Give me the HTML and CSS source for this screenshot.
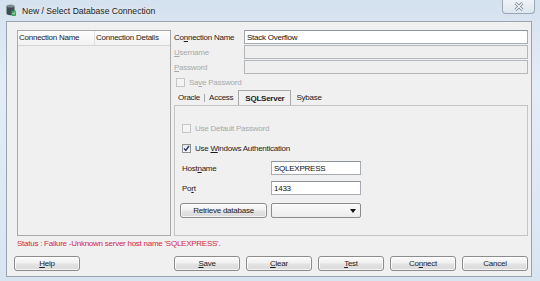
FILE: index.html
```html
<!DOCTYPE html>
<html lang="en">

<head>
    <meta charset="UTF-8">
    <title>New / Select Database Connection</title>
    <link rel="stylesheet" href="styles.css">
</head>

<body>
    <div class="window">
        <div class="titlebar">
            <svg class="app-icon" viewBox="0 0 10 12" width="10" height="12">
                <path d="M0.5 2v7.6c0 .9 1.8 1.6 4 1.6s4-.7 4-1.6V2z" fill="#3e4d52"/>
                <ellipse cx="4.5" cy="2" rx="4" ry="1.6" fill="#7d8c90"/>
                <rect x="5.5" y="6.5" width="4.5" height="5.5" rx="1" fill="#35a457"/>
                <path d="M6.5 9.2l1 1 1.6-2" stroke="#e8f5ea" stroke-width="0.9" fill="none"/>
            </svg>
            <span class="title">New / Select Database Connection</span>
            <div class="close-btn">
                <svg viewBox="0 0 10 9" width="10" height="9">
                    <path d="M1.5 1l7 7M8.5 1l-7 7" stroke="#7c8794" stroke-width="3"/>
                    <path d="M1.5 1l7 7M8.5 1l-7 7" stroke="#f3f6f9" stroke-width="1.3"/>
                </svg>
            </div>
        </div>

        <div class="client">
            <div class="main">
                <!-- saved connections -->
                <div class="conn-list">
                    <div class="list-head">
                        <div class="col col-name">Connection Name</div>
                        <div class="col">Connection Details</div>
                    </div>
                </div>

                <div class="form">
                    <div class="row">
                        <label>Co<u>n</u>nection Name</label>
                        <input type="text" value="Stack Overflow">
                    </div>
                    <div class="row">
                        <label class="disabled"><u>U</u>sername</label>
                        <input type="text" disabled>
                    </div>
                    <div class="row">
                        <label class="disabled"><u>P</u>assword</label>
                        <input type="password" disabled>
                    </div>
                    <div class="check-row disabled">
                        <span class="check"></span>
                        <span>Sa<u>v</u>e Password</span>
                    </div>

                    <div class="tabs">
                        <span class="tab tab-sep">Oracle</span>
                        <span class="tab">Access</span>
                        <span class="tab selected">SQLServer</span>
                        <span class="tab tab-last">Sybase</span>
                    </div>
                    <div class="tab-panel">
                        <div class="panel-check disabled">
                            <span class="check"></span>
                            <span>Use Default Password</span>
                        </div>
                        <div class="panel-check second">
                            <span class="check checked">
                                <svg viewBox="0 0 7 7" width="7" height="7">
                                    <path d="M1 3.5l1.8 2L6 1" stroke="#283a6e" stroke-width="1.4" fill="none"/>
                                </svg>
                            </span>
                            <span>Use <u>W</u>indows Authentication</span>
                        </div>
                        <div class="panel-row host-row">
                            <label>Host<u>n</u>ame</label>
                            <input type="text" value="SQLEXPRESS">
                        </div>
                        <div class="panel-row port-row">
                            <label>Po<u>r</u>t</label>
                            <input type="text" value="1433">
                        </div>
                        <div class="panel-row retrieve-row">
                            <button class="btn retrieve">Retrieve database</button>
                            <div class="combo"><span class="arrow"></span></div>
                        </div>
                    </div>
                </div>
            </div>

            <p class="status">Status : Failure -Unknown server host name 'SQLEXPRESS'.</p>

            <div class="actions">
                <button class="btn"><u>H</u>elp</button>
                <div class="action-group">
                    <button class="btn"><u>S</u>ave</button>
                    <button class="btn"><u>C</u>lear</button>
                    <button class="btn"><u>T</u>est</button>
                    <button class="btn">Co<u>n</u>nect</button>
                    <button class="btn">Cancel</button>
                </div>
            </div>
        </div>
    </div>
</body>

</html>
```

FILE: styles.css
```css
body {
    margin: 0;
    width: 540px;
    height: 281px;
    overflow: hidden;
    font-family: "Liberation Sans", Arial, sans-serif;
    font-size: 8px;
    letter-spacing: -0.25px;
    color: #1c1c1c;
}

.window {
    height: 281px;
    display: flex;
    flex-direction: column;
    background: linear-gradient(#d4e1ee, #e4edf6 30%, #d8e5f1);
}

/* title bar */
.titlebar {
    height: 21px;
    display: flex;
    align-items: flex-start;
    padding-left: 6px;
    flex-shrink: 0;
}

.app-icon {
    margin-top: 4px;
}

.title {
    margin: 6px 0 0 6px;
    font-size: 8.6px;
    letter-spacing: 0;
    line-height: 10px;
    color: #222;
    text-shadow: 0 0 6px #fff;
}

.close-btn {
    margin-left: auto;
    margin-right: 5px;
    width: 31px;
    height: 13px;
    border: 1px solid #9aa7b4;
    border-top: none;
    border-radius: 0 0 4px 4px;
    background: linear-gradient(#eef3f8, #dde6ef);
    display: flex;
    justify-content: center;
    align-items: center;
}

/* client area */
.client {
    flex: 1;
    margin: 0 8px 4px 6px;
    border: 1px solid #97a4b1;
    background: #f0f0f0;
    padding: 8px 3px 4px 10px;
    display: flex;
    flex-direction: column;
}

.main {
    display: flex;
    height: 206px;
}

.conn-list {
    width: 154px;
    box-sizing: border-box;
    margin-right: 3px;
    border: 1px solid #a9a9a9;
    background: #f0f0f0;
}

.list-head {
    display: flex;
    height: 15px;
    box-sizing: border-box;
    background: linear-gradient(#fdfdfd, #f2f2f2);
    border-bottom: 1px solid #d6d6d6;
}

.col {
    padding-left: 1px;
    line-height: 14px;
}

.col-name {
    width: 75px;
    border-right: 1px solid #e0e0e0;
}

.form {
    flex: 1;
    display: flex;
    flex-direction: column;
}

.row {
    display: flex;
    align-items: center;
    height: 14px;
    margin-bottom: 1px;
}

.row label {
    width: 70px;
}

input {
    flex: 1;
    height: 14px;
    box-sizing: border-box;
    margin: 0;
    padding: 0 2px;
    font: inherit;
    letter-spacing: inherit;
    color: #111;
    border: 1px solid #a7acb2;
    border-top-color: #8f959c;
    background: #fff;
    outline: none;
}

input:disabled {
    background: #efefef;
    border-color: #b4b8bd;
}

.disabled {
    color: #a9a9a9;
}

.check {
    width: 9px;
    height: 9px;
    box-sizing: border-box;
    border: 1px solid #8e8f8f;
    background: linear-gradient(#e6e6e6, #fdfdfd);
    margin-right: 4px;
    display: flex;
    justify-content: center;
    align-items: center;
}

.disabled .check {
    border-color: #c6c6c6;
    background: #f4f4f4;
}

.check-row {
    display: flex;
    align-items: center;
    height: 11px;
    margin-top: 2px;
    padding-left: 2px;
}

/* tabs */
.tabs {
    display: flex;
    height: 14px;
    margin-top: 3px;
    flex-shrink: 0;
}

.tab {
    padding: 0 4px 0 4px;
    line-height: 14px;
}

.tab-sep {
    padding-right: 4px;
    border-right: 1px solid #a8a8a8;
    margin: 3px 0;
    line-height: 8px;
}

.tab.selected {
    position: relative;
    z-index: 1;
    height: 15px;
    margin: -1px 0 -1px 1px;
    padding: 0 6px;
    line-height: 16px;
    font-weight: bold;
    background: #f0f0f0;
    border: 1px solid #a8a8a8;
    border-bottom: none;
    box-sizing: border-box;
}

.tab-last {
    padding-left: 5px;
}

.tab-panel {
    flex: 1;
    border: 1px solid #c4c4c4;
    padding-left: 7px;
    display: flex;
    flex-direction: column;
}

.panel-check {
    display: flex;
    align-items: center;
    height: 10px;
    margin-top: 17px;
}

.panel-check.second {
    margin-top: 10px;
}

.panel-row {
    display: flex;
    align-items: center;
    height: 14px;
}

.panel-row label {
    width: 89px;
}

.panel-row input {
    flex: none;
    width: 90px;
}

.host-row {
    margin-top: 8px;
}

.port-row {
    margin-top: 6px;
}

.retrieve-row {
    margin-top: 8px;
    height: 15px;
}

/* buttons */
.btn {
    height: 15px;
    width: 66px;
    box-sizing: border-box;
    margin: 0;
    padding: 0;
    font: inherit;
    letter-spacing: inherit;
    color: #1c1c1c;
    border: 1px solid #8c8c8c;
    border-radius: 3px;
    background: linear-gradient(#fbfbfb, #f0f0f0 48%, #e3e3e3 52%, #dadada);
    box-shadow: inset 0 0 0 1px rgba(255, 255, 255, 0.7);
}

.btn.retrieve {
    width: 87px;
    margin: 0 4px 0 -2px;
}

.combo {
    width: 90px;
    height: 15px;
    box-sizing: border-box;
    border: 1px solid #8c8c8c;
    border-radius: 2px;
    background: linear-gradient(#fafafa, #ececec);
    display: flex;
    align-items: center;
    justify-content: flex-end;
    padding-right: 4px;
}

.arrow {
    width: 0;
    height: 0;
    border-left: 3px solid transparent;
    border-right: 3px solid transparent;
    border-top: 4px solid #111;
}

.status {
    margin: 1px 0 0 0;
    height: 14px;
    line-height: 14px;
    color: #d0284a;
}

.actions {
    display: flex;
    margin: 5px 0 0 -3px;
}

.action-group {
    margin-left: auto;
    display: flex;
    gap: 6px;
}
```
